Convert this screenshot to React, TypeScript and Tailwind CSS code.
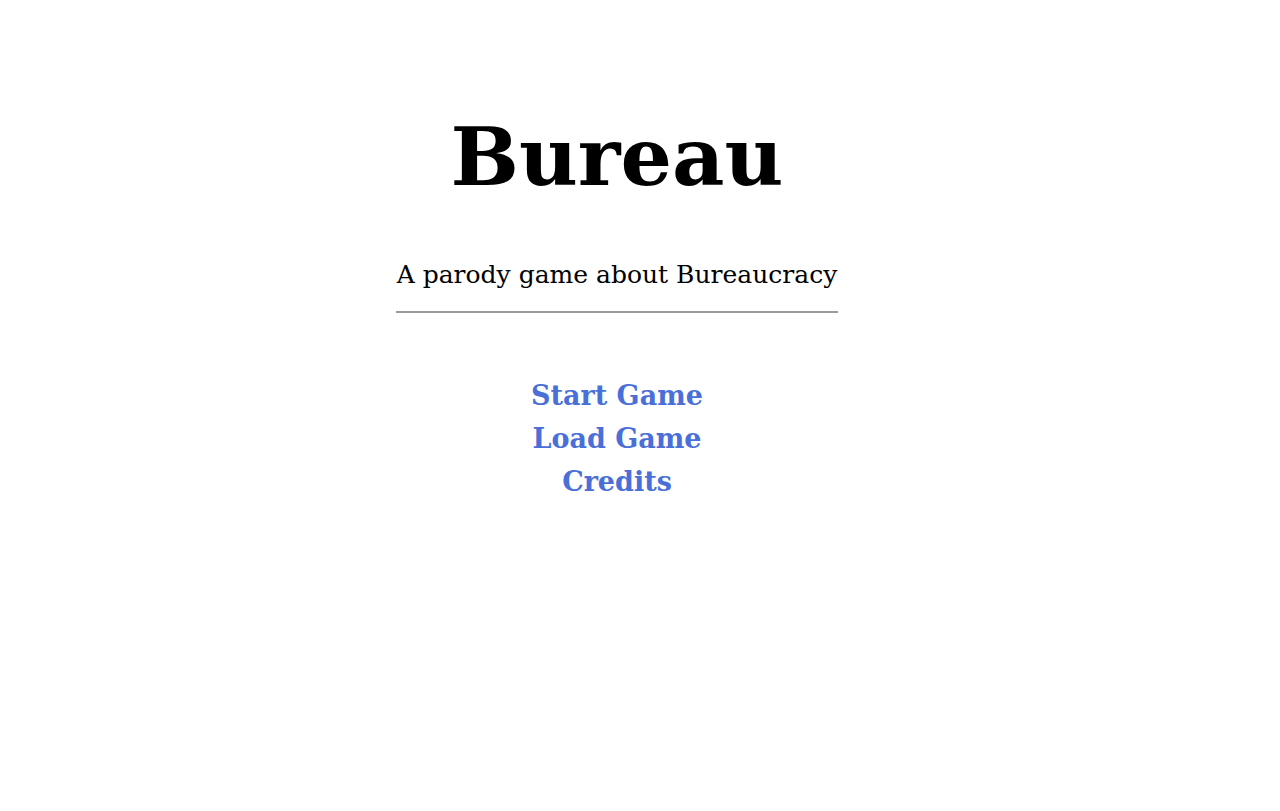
export default function App() {
  const links = ["Start Game", "Load Game", "Credits"];
  return (
    <div className="min-h-screen bg-white text-black font-['DejaVu_Serif',serif]">
      <div className="mr-[46px] flex flex-col items-center pt-[112px]">
        <h1 className="text-[81px] leading-[90px] font-bold">Bureau</h1>
        <div className="mt-[57px] w-[442px] flex flex-col items-center">
          <p className="text-[25px] leading-[32px]">A parody game about Bureaucracy</p>
          <div className="mt-[20px] w-full h-[2px] bg-[#9a9a9a]" />
        </div>
        <nav className="mt-[61px] flex flex-col items-center">
          {links.map((l) => (
            <a key={l} href="#" className="text-[27px] leading-[43px] font-bold text-[#4a6fd8]">
              {l}
            </a>
          ))}
        </nav>
      </div>
    </div>
  );
}
